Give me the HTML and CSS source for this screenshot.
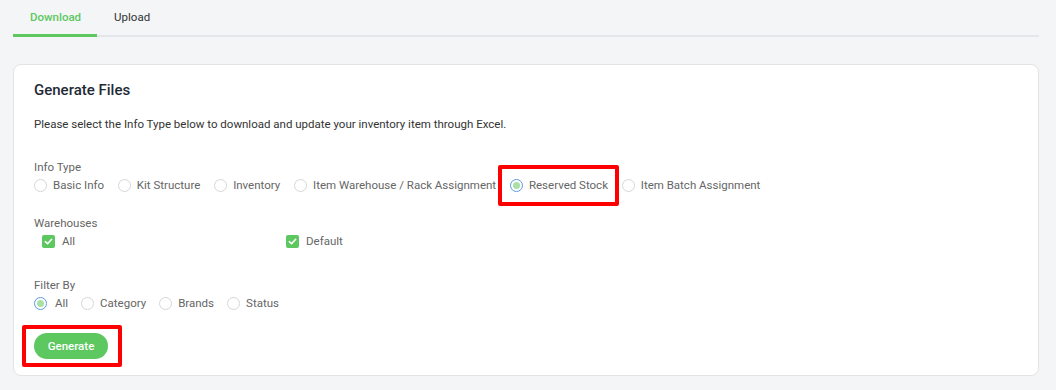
FILE: index.html
```html
<!DOCTYPE html>
<html lang="en">
<head>
  <meta charset="UTF-8">
  <title>Import / Export Items</title>
  <meta name="viewport" content="width=device-width, initial-scale=1">
  <link rel="stylesheet" href="styles.css">
</head>
<body>

  <div class="tabs">
    <div class="tab active">Download</div>
    <div class="tab">Upload</div>
  </div>

  <div class="card">
    <h2>Generate Files</h2>
    <p class="desc">Please select the Info Type below to download and update your inventory item through Excel.</p>

    <div class="group">
      <div class="label">Info Type</div>
      <div class="options info">
        <label class="radio"><span class="dot"></span>Basic Info</label>
        <label class="radio"><span class="dot"></span>Kit Structure</label>
        <label class="radio"><span class="dot"></span>Inventory</label>
        <label class="radio"><span class="dot"></span>Item Warehouse / Rack Assignment</label>
        <label class="radio checked mark-wrap"><span class="dot"></span>Reserved Stock<span class="mark mark-stock"></span></label>
        <label class="radio"><span class="dot"></span>Item Batch Assignment</label>
      </div>
    </div>

    <div class="group warehouses">
      <div class="label">Warehouses</div>
      <div class="checks">
        <label class="check"><span class="box"><svg width="9" height="9" viewBox="0 0 10 10"><path d="M1.5 5.2 4 7.5 8.5 2.5" fill="none" stroke="#fff" stroke-width="1.8" stroke-linecap="round" stroke-linejoin="round"/></svg></span>All</label>
        <label class="check"><span class="box"><svg width="9" height="9" viewBox="0 0 10 10"><path d="M1.5 5.2 4 7.5 8.5 2.5" fill="none" stroke="#fff" stroke-width="1.8" stroke-linecap="round" stroke-linejoin="round"/></svg></span>Default</label>
      </div>
    </div>

    <div class="group filter">
      <div class="label">Filter By</div>
      <div class="options">
        <label class="radio checked"><span class="dot"></span>All</label>
        <label class="radio"><span class="dot"></span>Category</label>
        <label class="radio"><span class="dot"></span>Brands</label>
        <label class="radio"><span class="dot"></span>Status</label>
      </div>
    </div>

    <div class="mark-wrap btn-wrap">
      <button class="btn">Generate</button>
      <span class="mark mark-btn"></span>
    </div>
  </div>

</body>
</html>
```

FILE: styles.css
```css
body {
  margin: 0;
  padding: 0 17px 0 13px;
  background: #f4f5f7;
  font-family: Roboto, "Liberation Sans", Arial, sans-serif;
  font-size: 11.5px;
  line-height: 14px;
  color: #666;
}
.tabs {
  display: flex;
  border-bottom: 2px solid #e4e6e9;
}
.tab {
  padding: 10px 16px 10px 17px;
  color: #333;
  margin-bottom: -2px;
  border-bottom: 3px solid transparent;
}
.tab.active {
  color: #5cc85f;
  font-weight: 500;
  border-bottom-color: #5cc85f;
}
.card {
  margin-top: 27px;
  background: #fff;
  border: 1px solid #e3e3e3;
  border-radius: 8px;
  padding: 16px 20px 16px 20px;
}
h2 {
  margin: 0;
  font-size: 15px;
  line-height: 18px;
  font-weight: 500;
  color: #1f2a37;
}
.desc {
  margin: 18px 0 0 0;
  color: #333;
}
.group {
  margin-top: 29px;
}
.group.warehouses {
  margin-top: 24px;
}
.group.filter {
  margin-top: 30px;
}
.label {
  color: #666;
  margin-bottom: 4px;
}
.options {
  display: flex;
  gap: 13px;
  height: 14px;
}
.options.info {
  gap: 13.8px;
}
.radio {
  display: flex;
  align-items: center;
  gap: 6px;
  color: #666;
}
.dot {
  width: 11px;
  height: 11px;
  border: 1px solid #d6d6d6;
  border-radius: 50%;
  position: relative;
}
.radio.checked .dot {
  border-color: #5b9bdb;
}
.radio.checked .dot::after {
  content: "";
  position: absolute;
  left: 2px;
  top: 2px;
  width: 7px;
  height: 7px;
  border-radius: 50%;
  background: #a8e0a6;
}
.filter .radio.checked {
  gap: 8px;
}
.checks {
  display: grid;
  grid-template-columns: 244px 244px;
  padding-left: 8px;
  height: 14px;
}
.check {
  display: flex;
  align-items: center;
  gap: 7px;
}
.box {
  width: 13px;
  height: 13px;
  background: #5cc85f;
  border-radius: 2px;
  display: flex;
  align-items: center;
  justify-content: center;
}
.mark-wrap {
  position: relative;
}
.mark {
  position: absolute;
  border: 4px solid #f00;
  border-radius: 2px;
  pointer-events: none;
}
.mark-stock {
  left: -12px;
  right: -11px;
  top: -13px;
  bottom: -14px;
}
.btn-wrap {
  margin-top: 23px;
  width: 74px;
}
.btn {
  display: block;
  width: 74px;
  height: 26px;
  border: 0;
  border-radius: 13px;
  background: #5cc85f;
  color: #fff;
  font-family: inherit;
  font-size: 11.5px;
  font-weight: 500;
}
.mark-btn {
  left: -12px;
  right: -14px;
  top: -8px;
  bottom: -8px;
}
```
